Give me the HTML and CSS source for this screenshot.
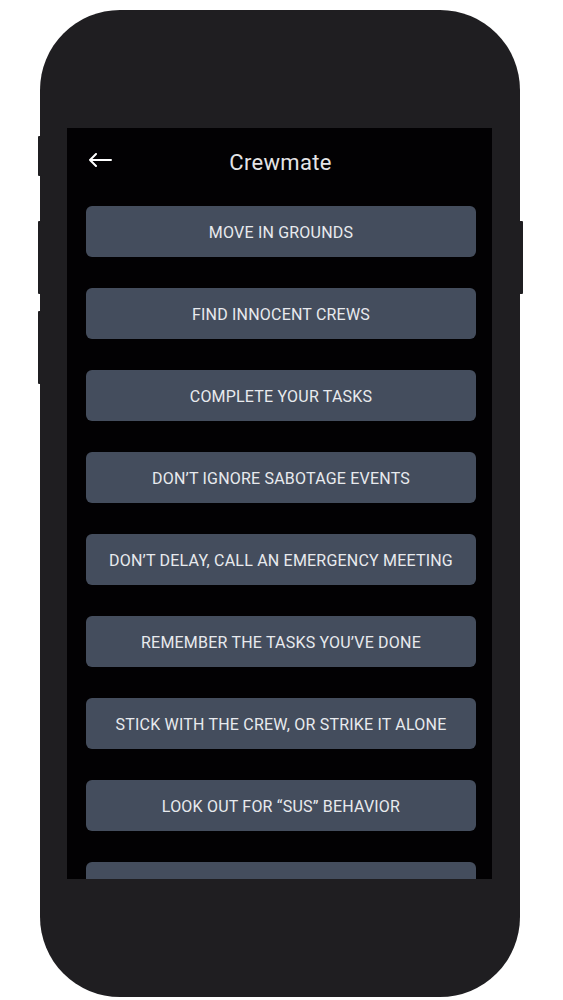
FILE: index.html
```html
<!DOCTYPE html>
<html lang="en">
<head>
	<meta charset="utf-8">
	<title>Crewmate</title>
	<link rel="stylesheet" href="styles.css">
</head>
<body>
	<div class="page">
		<div class="phone">
			<span class="side-btn mute"></span>
			<span class="side-btn vol-up"></span>
			<span class="side-btn vol-down"></span>
			<span class="side-btn power"></span>
			<div class="screen">
				<div class="header">
					<a href="#" class="back">
						<svg width="24" height="14" viewBox="0 0 24 14">
							<path d="M23 7H2M8 1L2 7l6 6" fill="none" stroke="#fff" stroke-width="2" stroke-linecap="round" stroke-linejoin="round"/>
						</svg>
					</a>
					<h1 class="title">Crewmate</h1>
				</div>
				<ul class="tips">
					<li><a href="#">Move in grounds</a></li>
					<li><a href="#">Find innocent crews</a></li>
					<li><a href="#">Complete your tasks</a></li>
					<li><a href="#">Don’t ignore sabotage events</a></li>
					<li><a href="#">Don’t delay, call an emergency meeting</a></li>
					<li><a href="#">Remember the tasks you’ve done</a></li>
					<li><a href="#">Stick with the crew, or strike it alone</a></li>
					<li><a href="#">Look out for “sus” behavior</a></li>
					<li><a href="#"></a></li>
				</ul>
			</div>
		</div>
	</div>
</body>
</html>
```

FILE: styles.css
```css
body{
	margin: 0;
	background: #fff;
	font-family: Roboto, "DejaVu Sans", sans-serif;
}
a{
	text-decoration: none;
}
.page{
	padding: 10px 0 0 40px;
}
/* 机身 */
.phone{
	position: relative;
	width: 480px;
	height: 987px;
	box-sizing: border-box;
	padding: 118px 0 0 27px;
	background: #1f1e21;
	border-radius: 80px;
}
.side-btn{
	position: absolute;
	width: 4px;
	background: #1f1e21;
	border-radius: 1px;
}
.mute{ left: -2px; top: 126px; height: 40px; }
.vol-up{ left: -2px; top: 211px; height: 73px; }
.vol-down{ left: -2px; top: 301px; height: 73px; }
.power{ right: -3px; top: 211px; height: 73px; }
/* 屏幕 */
.screen{
	width: 425px;
	height: 751px;
	background: #020103;
	overflow: hidden;
}
.header{
	position: relative;
	height: 66px;
	display: flex;
	align-items: center;
	justify-content: center;
}
.back{
	position: absolute;
	left: 21px;
	top: 25px;
	line-height: 0;
}
.title{
	margin: 2px 0 0 2px;
	font-size: 22px;
	font-weight: 400;
	letter-spacing: 0.3px;
	color: #e4e4e6;
}
.tips{
	list-style: none;
	margin: 0;
	padding: 12px 16px 0 19px;
	display: flex;
	flex-direction: column;
	gap: 31px;
}
.tips a{
	display: flex;
	align-items: center;
	justify-content: center;
	height: 51px;
	box-sizing: border-box;
	padding-top: 2px;
	border-radius: 6px;
	background: #444d5d;
	color: #e8eaee;
	font-size: 16px;
	text-transform: uppercase;
	letter-spacing: 0.2px;
}
```
